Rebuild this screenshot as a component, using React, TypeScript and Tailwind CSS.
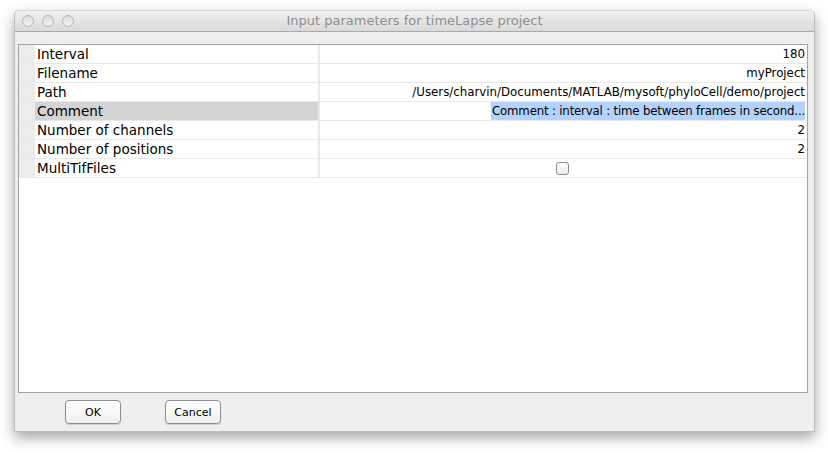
import React from "react";

const rows = [
  { label: "Interval", value: "180" },
  { label: "Filename", value: "myProject" },
  { label: "Path", value: "/Users/charvin/Documents/MATLAB/mysoft/phyloCell/demo/project" },
  { label: "Comment", value: "Comment : interval : time between frames in second...", selected: true },
  { label: "Number of channels", value: "2" },
  { label: "Number of positions", value: "2" },
  { label: "MultiTifFiles", checkbox: true },
];

function Light() {
  return (
    <div className="w-[12px] h-[12px] rounded-full border border-[#b4b4b4] bg-gradient-to-b from-[#dcdcdc] to-[#f4f4f4]" />
  );
}

function Button({ children }: { children: React.ReactNode }) {
  return (
    <button className="w-[56px] h-[24px] rounded-[4px] border border-[#8e8e8e] bg-gradient-to-b from-[#ffffff] to-[#f0f0f0] shadow-[0_1px_1px_rgba(0,0,0,0.15)] text-[11px] text-black leading-none">
      {children}
    </button>
  );
}

export default function App() {
  return (
    <div
      className="w-[828px] h-[452px] bg-white pt-[10px] pl-[14px]"
      style={{ fontFamily: '"DejaVu Sans", "Liberation Sans", sans-serif' }}
    >
      <div className="w-[801px] h-[422px] flex flex-col rounded-t-[5px] bg-[#efefef] shadow-[0_6px_14px_rgba(0,0,0,0.35)] border border-[#bdbdbd] border-t-[#d8d8d8]">
        {/* title bar */}
        <div className="relative h-[21px] shrink-0 flex items-center rounded-t-[5px] bg-gradient-to-b from-[#f0f0f0] to-[#dadada] border-b border-[#a9a9a9]">
          <div className="flex gap-[8px] pl-[7px]">
            <Light />
            <Light />
            <Light />
          </div>
          <div className="absolute inset-0 flex items-center justify-center text-[13px] text-[#8e8e8e]">
            Input parameters for timeLapse project
          </div>
        </div>

        {/* body */}
        <div className="flex-1 flex flex-col pt-[12px] px-[3px]">
          <div className="h-[349px] w-[790px] border border-[#a3a3a3] bg-white flex flex-col">
            {rows.map((r) => (
              <div key={r.label} className="h-[19px] flex border-b border-[#e8e8e8]">
                <div className="w-[16px] bg-[#ececec]" />
                <div
                  className={`w-[285px] border-r-2 border-[#e8e8e8] pl-[2px] text-[13.5px] leading-[18px] text-black ${
                    r.selected ? "bg-[#d4d4d4]" : ""
                  }`}
                >
                  {r.label}
                </div>
                <div className="flex-1 flex justify-end items-center pr-[2px]">
                  {r.checkbox ? (
                    <div className="w-[13px] h-[13px] rounded-[3px] border border-[#8c8c8c] bg-gradient-to-b from-white to-[#ececec] mr-[236px]" />
                  ) : (
                    <span
                      className={`text-[11.8px] leading-[18px] text-black ${
                        r.selected ? "bg-[#b3d3fc] pl-[1px] tracking-[-0.2px]" : ""
                      }`}
                    >
                      {r.value}
                    </span>
                  )}
                </div>
              </div>
            ))}
          </div>

          <div className="flex gap-[44px] pl-[47px] pt-[7px]">
            <Button>OK</Button>
            <Button>Cancel</Button>
          </div>
        </div>
      </div>
    </div>
  );
}
